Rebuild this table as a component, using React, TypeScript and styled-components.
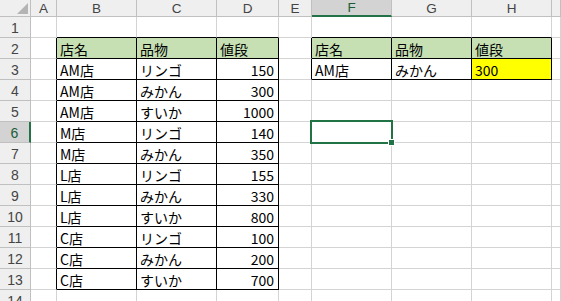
import React from "react";
import styled, { createGlobalStyle, css } from "styled-components";

const Global = createGlobalStyle`
  html, body { margin: 0; padding: 0; background: #ffffff; }
  body { font-family: "Noto Sans CJK JP", "Noto Sans", sans-serif; overflow: hidden; }
`;

const GRID = "#d4d4d4";
const HEAD_LINE = "#c0c0c0";
const GREEN = "#217346";

const Sheet = styled.div`
  display: grid;
  grid-template-columns: 31px 26px 80px 80px 62px 33px 80px 80px 80px 1fr;
  grid-template-rows: 17px repeat(14, 21px);
  width: 561px;
  height: 301px;
  overflow: hidden;
`;

const Corner = styled.div`
  position: relative;
  background: #efefef;
  border-right: 1px solid ${HEAD_LINE};
  border-bottom: 1px solid ${HEAD_LINE};
  box-sizing: border-box;
  svg { position: absolute; right: 2px; bottom: 2px; }
`;

const ColHead = styled.div<{ $active?: boolean }>`
  box-sizing: border-box;
  background: ${(p) => (p.$active ? "#d3d3d3" : "#efefef")};
  color: ${(p) => (p.$active ? "#1a5c38" : "#444444")};
  border-right: 1px solid ${HEAD_LINE};
  border-bottom: ${(p) => (p.$active ? `2px solid ${GREEN}` : `1px solid ${HEAD_LINE}`)};
  font-family: "Liberation Sans", Arial, sans-serif;
  font-size: 13.5px;
  line-height: 15px;
  display: flex;
  align-items: center;
  justify-content: center;
`;

const RowHead = styled.div<{ $active?: boolean }>`
  box-sizing: border-box;
  background: ${(p) => (p.$active ? "#d3d3d3" : "#efefef")};
  color: ${(p) => (p.$active ? "#1a5c38" : "#444444")};
  border-right: ${(p) => (p.$active ? `2px solid ${GREEN}` : `1px solid ${HEAD_LINE}`)};
  border-bottom: 1px solid ${HEAD_LINE};
  font-family: "Liberation Sans", Arial, sans-serif;
  font-size: 14px;
  line-height: 16px;
  display: flex;
  align-items: center;
  justify-content: center;
  padding-top: 1px;
`;

const Cell = styled.div<{
  $right?: boolean;
  $fill?: string;
  $rb?: boolean;
  $bb?: boolean;
}>`
  position: relative;
  box-sizing: border-box;
  background: ${(p) => p.$fill || "#ffffff"};
  border-right: 1px solid ${(p) => (p.$rb ? "#000000" : GRID)};
  border-bottom: 1px solid ${(p) => (p.$bb ? "#000000" : GRID)};
  font-size: 14px;
  line-height: 18px;
  color: #000000;
  display: flex;
  align-items: center;
  padding: 1px 4px 0 3px;
  white-space: nowrap;
  overflow: visible;
  ${(p) =>
    p.$right &&
    css`
      justify-content: flex-end;
    `}
`;

const Selection = styled.div`
  position: absolute;
  left: -2px;
  top: -2px;
  right: -2px;
  bottom: -2px;
  border: 2px solid ${GREEN};
  pointer-events: none;
  z-index: 2;
`;

const FillHandle = styled.div`
  position: absolute;
  right: -4px;
  bottom: -4px;
  width: 5px;
  height: 5px;
  background: ${GREEN};
  border: 1px solid #ffffff;
  z-index: 3;
`;

type CellData = { text: string; right?: boolean; fill?: string };

const cols = ["A", "B", "C", "D", "E", "F", "G", "H", ""];
const NROWS = 14;

const HEAD_FILL = "#c6e0b4";

const data: Record<string, CellData> = {};
const put = (ref: string, text: string, right = false, fill?: string) => {
  data[ref] = { text, right, fill };
};

put("B2", "店名", false, HEAD_FILL);
put("C2", "品物", false, HEAD_FILL);
put("D2", "値段", false, HEAD_FILL);
const rows: [string, string, string][] = [
  ["AM店", "リンゴ", "150"],
  ["AM店", "みかん", "300"],
  ["AM店", "すいか", "1000"],
  ["M店", "リンゴ", "140"],
  ["M店", "みかん", "350"],
  ["L店", "リンゴ", "155"],
  ["L店", "みかん", "330"],
  ["L店", "すいか", "800"],
  ["C店", "リンゴ", "100"],
  ["C店", "みかん", "200"],
  ["C店", "すいか", "700"],
];
rows.forEach((r, i) => {
  const n = i + 3;
  put(`B${n}`, r[0]);
  put(`C${n}`, r[1]);
  put(`D${n}`, r[2], true);
});
put("F2", "店名", false, HEAD_FILL);
put("G2", "品物", false, HEAD_FILL);
put("H2", "値段", false, HEAD_FILL);
put("F3", "AM店");
put("G3", "みかん");
put("H3", "300", false, "#ffff00");

const boxed = (c: number, r: number) => {
  const col = cols[c];
  if (["B", "C", "D"].includes(col) && r >= 2 && r <= 13) return true;
  if (["F", "G", "H"].includes(col) && r >= 2 && r <= 3) return true;
  return false;
};

export default function App() {
  const cells: React.ReactNode[] = [];
  cells.push(
    <Corner key="corner">
      <svg width="11" height="11" viewBox="0 0 11 11">
        <polygon points="11,0 11,11 0,11" fill="#b4b4b4" />
      </svg>
    </Corner>
  );
  cols.forEach((c, i) => {
    cells.push(
      <ColHead key={`h${i}`} $active={c === "F"}>
        {c}
      </ColHead>
    );
  });
  for (let r = 1; r <= NROWS; r++) {
    cells.push(
      <RowHead key={`r${r}`} $active={r === 6}>
        {r}
      </RowHead>
    );
    cols.forEach((c, ci) => {
      const d = data[`${c}${r}`];
      const selected = c === "F" && r === 6;
      cells.push(
        <Cell
          key={`${c}${r}`}
          $right={d?.right}
          $fill={d?.fill}
          $rb={boxed(ci, r) || boxed(ci + 1, r)}
          $bb={boxed(ci, r) || boxed(ci, r + 1)}
        >
          {d?.text}
          {selected && (
            <>
              <Selection />
              <FillHandle />
            </>
          )}
        </Cell>
      );
    });
  }
  return (
    <>
      <Global />
      <Sheet>{cells}</Sheet>
    </>
  );
}
